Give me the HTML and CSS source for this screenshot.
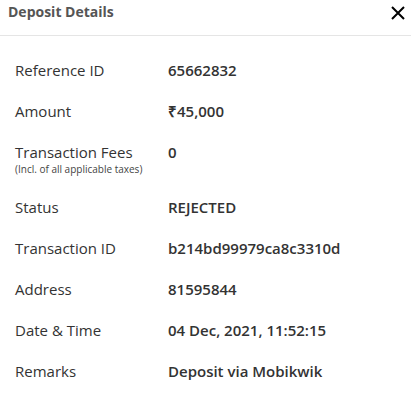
FILE: index.html
```html
<!DOCTYPE html>
<html lang="en">
  <head>
    <meta charset="UTF-8" />
    <meta name="viewport" content="width=device-width, initial-scale=1.0" />
    <title>Deposit Details</title>
    <link rel="stylesheet" href="styles.css">
  </head>
  <body>
    <div class="modal">
      <div class="modal-header">
        <h2>Deposit Details</h2>
        <span class="close">
          <svg width="14" height="14" viewBox="0 0 14 14">
            <path d="M1 1 L13 13 M13 1 L1 13" stroke="#000" stroke-width="2" fill="none" />
          </svg>
        </span>
      </div>

      <div class="modal-body">
        <div class="row">
          <div class="label">Reference ID</div>
          <div class="value">65662832</div>
        </div>
        <div class="row">
          <div class="label">Amount</div>
          <div class="value">₹45,000</div>
        </div>
        <div class="row">
          <div class="label">
            Transaction Fees
            <small>(Incl. of all applicable taxes)</small>
          </div>
          <div class="value">0</div>
        </div>
        <div class="row">
          <div class="label">Status</div>
          <div class="value">REJECTED</div>
        </div>
        <div class="row">
          <div class="label">Transaction ID</div>
          <div class="value">b214bd99979ca8c3310d</div>
        </div>
        <div class="row">
          <div class="label">Address</div>
          <div class="value">81595844</div>
        </div>
        <div class="row">
          <div class="label">Date &amp; Time</div>
          <div class="value">04 Dec, 2021, 11:52:15</div>
        </div>
        <div class="row">
          <div class="label">Remarks</div>
          <div class="value">Deposit via Mobikwik</div>
        </div>
      </div>
    </div>
  </body>
</html>
```

FILE: styles.css
```css
* {
  box-sizing: border-box;
}

body {
  margin: 0;
  font-family: "Open Sans", sans-serif;
  background: #fff;
  color: #333;
}

.modal-header {
  display: flex;
  justify-content: space-between;
  align-items: flex-start;
  padding: 2px 6px 13px 8px;
  border-bottom: 1px solid #e5e5e5;
}

.modal-header h2 {
  margin: 0;
  font-size: 14px;
  line-height: 20px;
  font-weight: 700;
  color: #555;
}

.close {
  display: flex;
  padding-top: 4px;
  cursor: pointer;
}

.modal-body {
  padding: 24px 15px 0;
}

.row {
  display: flex;
  margin-bottom: 21px;
  font-size: 15px;
  line-height: 20px;
}

.label {
  width: 153px;
  flex-shrink: 0;
}

.label small {
  display: block;
  font-size: 10px;
  line-height: 14px;
  color: #444;
}

.value {
  font-weight: 600;
}
```
